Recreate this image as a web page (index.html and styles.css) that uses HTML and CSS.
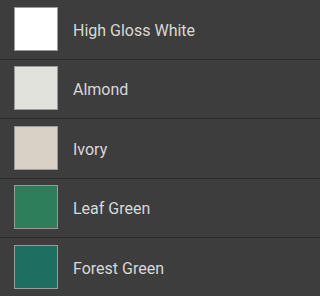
FILE: index.html
```html
<!DOCTYPE html>
<html>
<head>
<meta charset="utf-8">
<link rel="stylesheet" href="styles.css">
</head>
<body>
<ul class="list">
  <li class="row"><span class="swatch white"></span><span class="name">High Gloss White</span></li>
  <li class="row"><span class="swatch almond"></span><span class="name">Almond</span></li>
  <li class="row"><span class="swatch ivory"></span><span class="name">Ivory</span></li>
  <li class="row"><span class="swatch leaf"></span><span class="name">Leaf Green</span></li>
  <li class="row"><span class="swatch forest"></span><span class="name">Forest Green</span></li>
</ul>
</body>
</html>
```
FILE: styles.css
```css
html, body {
  margin: 0;
  padding: 0;
  background: #3d3d3d;
}
.list {
  list-style: none;
  margin: 0;
  padding: 0;
  font-family: Roboto, "Liberation Sans", sans-serif;
}
.row {
  display: flex;
  align-items: center;
  gap: 15px;
  height: 59.5px;
  box-sizing: border-box;
  padding: 0 0 1px 14px;
  border-bottom: 1px solid #2b2b2b;
}
.swatch {
  width: 42px;
  height: 42px;
  border: 1px solid #9a9a9a;
  flex: none;
}
.white { background: #ffffff; }
.almond { background: #e2e2dc; }
.ivory { background: #d9d1c5; }
.leaf { background: #2e7e5c; }
.forest { background: #1f6e62; }
.name {
  color: #d8d8d8;
  font-size: 16px;
  padding-top: 3px;
}
```
